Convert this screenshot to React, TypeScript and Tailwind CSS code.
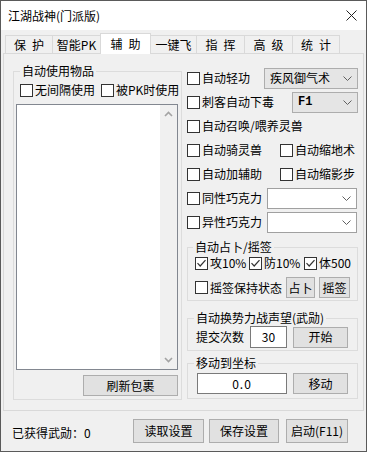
import React from "react";

const FONT = '"Noto Sans CJK SC", "Noto Sans", sans-serif';

const Box = ({ checked }: { checked?: boolean }) => (
  <span className="w-[13px] h-[13px] border border-[#333333] bg-white shrink-0 flex items-center justify-center">
    {checked && (
      <svg width="11" height="11" viewBox="0 0 11 11">
        <path d="M1.5 5.2 L4.2 8 L9.5 2.2" stroke="#333333" strokeWidth="1.2" fill="none" />
      </svg>
    )}
  </span>
);

const Check = ({ label, checked, className = "" }: { label: string; checked?: boolean; className?: string }) => (
  <div className={"flex items-center gap-[2px] shrink-0 " + className}>
    <Box checked={checked} />
    <span className="leading-[16px] whitespace-nowrap">{label}</span>
  </div>
);

const Chevron = () => (
  <svg width="9" height="5" viewBox="0 0 9 5" className="shrink-0">
    <path d="M0.5 0.5 L4.5 4.5 L8.5 0.5" stroke="#606060" strokeWidth="1" fill="none" />
  </svg>
);

const Select = ({ value, w, gray, mono }: { value: string; w: string; gray?: boolean; mono?: boolean }) => (
  <div
    className={
      "h-[21px] flex items-center justify-between pl-[5px] pr-[5px] border shrink-0 " +
      w +
      (gray ? " bg-[#e5e5e5] border-[#adadad]" : " bg-white border-[#a0a0a0]")
    }
  >
    <span
      className={"leading-[16px] whitespace-nowrap " + (mono ? "font-bold text-[12px]" : "")}
      style={mono ? { fontFamily: '"Liberation Mono", monospace' } : undefined}
    >
      {value}
    </span>
    <Chevron />
  </div>
);

const Btn = ({ label, className = "" }: { label: string; className?: string }) => (
  <div
    className={
      "bg-[#e1e1e1] border border-[#adadad] flex items-center justify-center leading-[16px] whitespace-nowrap shrink-0 " +
      className
    }
  >
    {label}
  </div>
);

const tabs = [
  { parts: ["保", "护"], cls: "w-[47px] border-l" },
  { parts: ["智能PK"], cls: "w-[48px] border-l" },
  { parts: ["辅", "助"], cls: "w-[51px] border-l border-r", sel: true },
  { parts: ["一键飞"], cls: "w-[45px]" },
  { parts: ["指", "挥"], cls: "w-[48px] border-l" },
  { parts: ["高", "级"], cls: "w-[48px] border-l" },
  { parts: ["统", "计"], cls: "w-[48px] border-l border-r" },
];

export default function App() {
  return (
    <div
      className="w-[367px] h-[452px] bg-[#f0f0f0] border border-[#5a5a5a] flex flex-col text-[12px] text-black overflow-hidden"
      style={{ fontFamily: FONT }}
    >
      {/* title bar */}
      <div className="h-[29px] bg-white flex items-center justify-between pl-[7px] pr-[9px] shrink-0">
        <span className="leading-[16px]">江湖战神(门派版)</span>
        <svg width="11" height="11" viewBox="0 0 11 11">
          <path d="M0.5 0.5 L10.5 10.5 M10.5 0.5 L0.5 10.5" stroke="#222" strokeWidth="1" />
        </svg>
      </div>

      {/* tabs */}
      <div className="mt-[3px] h-[20px] flex items-end pl-[4px] shrink-0">
        {tabs.map((t) => (
          <div
            key={t.parts.join("")}
            className={
              "flex items-center justify-center gap-[6px] border-t border-[#d9d9d9] leading-[16px] whitespace-nowrap " +
              t.cls +
              (t.sel ? " h-[21px] bg-white relative z-10 mb-[-1px]" : " h-[18px] bg-[#f0f0f0]")
            }
          >
            {t.parts.map((p) => (
              <span key={p}>{p}</span>
            ))}
          </div>
        ))}
      </div>

      {/* panel */}
      <div className="mx-[2px] h-[358px] border border-[#d9d9d9] bg-[#f0f0f0] flex shrink-0">
        {/* left group */}
        <fieldset className="ml-[9px] mt-[9px] w-[169px] h-[337px] border border-[#dcdcdc] flex flex-col shrink-0">
          <legend className="ml-[6px] px-[2px] leading-[16px]">自动使用物品</legend>
          <div className="mt-[3px] h-[16px] flex items-center pl-[6px]">
            <Check label="无间隔使用" />
            <Check label="被PK时使用" className="ml-[6px]" />
          </div>
          <div className="mt-[6px] ml-[2px] w-[162px] h-[266px] border border-[#828790] bg-white flex">
            <div className="flex-1" />
            <div className="w-[17px] bg-[#f0f0f0] flex flex-col justify-between items-center py-[6px]">
              <svg width="9" height="6" viewBox="0 0 9 6">
                <path d="M1 5 L4.5 1.5 L8 5" stroke="#a3a3a3" strokeWidth="1.6" fill="none" />
              </svg>
              <svg width="9" height="6" viewBox="0 0 9 6">
                <path d="M1 1 L4.5 4.5 L8 1" stroke="#a3a3a3" strokeWidth="1.6" fill="none" />
              </svg>
            </div>
          </div>
          <Btn label="刷新包裹" className="mt-[5px] self-end mr-[3px] w-[95px] h-[21px]" />
        </fieldset>

        {/* right column */}
        <div className="ml-[5px] mt-[12px] w-[171px] flex flex-col shrink-0">
          <div className="h-[24px] flex items-center">
            <Check label="自动轻功" />
            <div className="ml-auto">
              <Select value="疾风御气术" w="w-[94px]" gray />
            </div>
          </div>
          <div className="h-[24px] flex items-center">
            <Check label="刺客自动下毒" />
            <div className="ml-auto">
              <Select value="F1" w="w-[66px]" gray mono />
            </div>
          </div>
          <div className="h-[24px] flex items-center">
            <Check label="自动召唤/喂养灵兽" />
          </div>
          <div className="h-[24px] flex items-center">
            <Check label="自动骑灵兽" className="w-[93px]" />
            <Check label="自动缩地术" />
          </div>
          <div className="h-[24px] flex items-center">
            <Check label="自动加辅助" className="w-[93px]" />
            <Check label="自动缩影步" />
          </div>
          <div className="h-[24px] flex items-center">
            <Check label="同性巧克力" />
            <div className="ml-auto mr-[1px]">
              <Select value="" w="w-[90px]" />
            </div>
          </div>
          <div className="h-[24px] flex items-center">
            <Check label="异性巧克力" />
            <div className="ml-auto mr-[1px]">
              <Select value="" w="w-[90px]" />
            </div>
          </div>

          {/* 占卜 */}
          <fieldset className="mt-[5px] h-[62px] border border-[#dcdcdc] flex flex-col">
            <legend className="ml-[5px] px-[2px] leading-[16px]">自动占卜/摇签</legend>
            <div className="h-[16px] flex items-center pl-[7px]">
              <Check label="攻10%" checked className="w-[54px]" />
              <Check label="防10%" checked className="w-[55px]" />
              <Check label="体500" checked />
            </div>
            <div className="mt-[6px] h-[21px] flex items-center pl-[7px]">
              <Check label="摇签保持状态" />
              <Btn label="占卜" className="ml-[4px] w-[29px] h-[21px]" />
              <Btn label="摇签" className="ml-[4px] w-[31px] h-[21px]" />
            </div>
          </fieldset>

          {/* 武勋 */}
          <fieldset className="mt-[9px] h-[41px] border border-[#dcdcdc] flex flex-col">
            <legend className="ml-[6px] px-[2px] leading-[16px]">自动换势力战声望(武勋)</legend>
            <div className="h-[22px] flex items-center pl-[8px]">
              <span className="leading-[16px]">提交次数</span>
              <div className="ml-[6px] w-[37px] h-[22px] bg-white border border-[#7a7a7a] flex items-center justify-center leading-[16px]">
                30
              </div>
              <Btn label="开始" className="ml-[6px] w-[55px] h-[21px]" />
            </div>
          </fieldset>

          {/* 坐标 */}
          <fieldset className="mt-[4px] h-[44px] border border-[#dcdcdc] flex flex-col">
            <legend className="ml-[6px] px-[2px] leading-[16px]">移动到坐标</legend>
            <div className="mt-[2px] h-[21px] flex items-center pl-[9px]">
              <div className="w-[90px] h-[21px] bg-white border border-[#7a7a7a] flex items-center justify-center leading-[16px] tracking-[1px]">
                0.0
              </div>
              <Btn label="移动" className="ml-[6px] w-[55px] h-[21px]" />
            </div>
          </fieldset>
        </div>
      </div>

      {/* bottom */}
      <div className="flex-1 flex items-center pl-[11px] pr-[18px]">
        <span className="leading-[16px] mt-[3px]">已获得武勋：0</span>
        <Btn label="读取设置" className="ml-auto w-[71px] h-[24px]" />
        <Btn label="保存设置" className="ml-[5px] w-[70px] h-[24px]" />
        <Btn label="启动(F11)" className="ml-[7px] w-[62px] h-[24px]" />
      </div>
    </div>
  );
}
